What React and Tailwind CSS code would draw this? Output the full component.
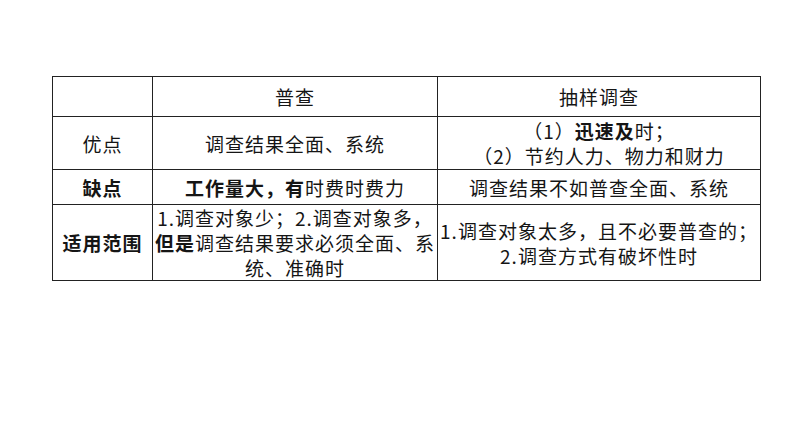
const font = { fontFamily: '"Noto Sans CJK SC", "Noto Sans", sans-serif' }

function Cell({ children, className = '' }) {
  return (
    <div className={`flex flex-col items-center justify-center whitespace-nowrap bg-white text-center text-[19px] leading-[25px] tracking-[1px] text-[#151515] ${className}`}>
      {children}
    </div>
  )
}

export default function App() {
  return (
    <div className="h-[447px] w-[794px] bg-white pl-[52px] pt-[76px]" style={font}>
      <div className="grid w-[709px] grid-cols-[99px_284px_322px] grid-rows-[39px_52px_34px_75px] gap-px border border-[#222] bg-[#222]">
        <Cell />
        <Cell>普查</Cell>
        <Cell>抽样调查</Cell>

        <Cell>优点</Cell>
        <Cell>调查结果全面、系统</Cell>
        <Cell className="leading-[24px]">
          <span>
            （1）<b className="font-semibold">迅速及</b>时；
          </span>
          <span>（2）节约人力、物力和财力</span>
        </Cell>

        <Cell className="font-semibold">缺点</Cell>
        <Cell>
          <span>
            <b className="font-semibold">工作量大，有</b>时费时费力
          </span>
        </Cell>
        <Cell>调查结果不如普查全面、系统</Cell>

        <Cell className="font-semibold">适用范围</Cell>
        <Cell>
          <span>1.调查对象少；2.调查对象多，</span>
          <span>
            <b className="font-semibold">但是</b>调查结果要求必须全面、系
          </span>
          <span>统、准确时</span>
        </Cell>
        <Cell>
          <span>1.调查对象太多，且不必要普查的；</span>
          <span>2.调查方式有破坏性时</span>
        </Cell>
      </div>
    </div>
  )
}
